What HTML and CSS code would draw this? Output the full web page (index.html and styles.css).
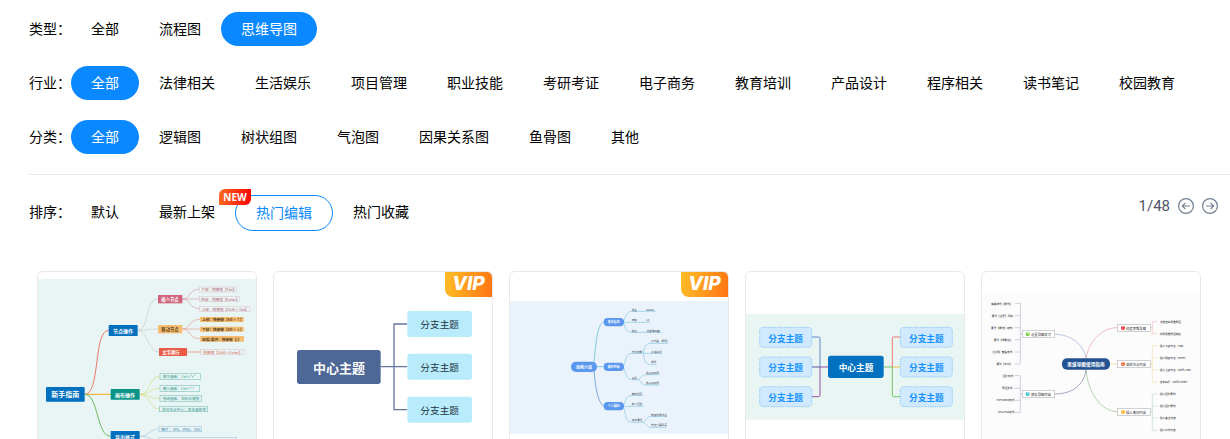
FILE: index.html
```html
<!DOCTYPE html>
<html lang="zh-CN">
<head>
    <meta charset="UTF-8">
    <meta name="viewport" content="width=device-width, initial-scale=1.0">
    <title>思维导图</title>
    <link rel="stylesheet" href="styles.css">
</head>
<body>
    <main class="page">
        <!-- 筛选条件 -->
        <section class="filters">
            <div class="row">
                <span class="label">类型：</span>
                <nav class="options">
                    <a href="#">全部</a>
                    <a href="#">流程图</a>
                    <a href="#" class="active">思维导图</a>
                </nav>
            </div>
            <div class="row">
                <span class="label">行业：</span>
                <nav class="options">
                    <a href="#" class="active">全部</a>
                    <a href="#">法律相关</a>
                    <a href="#">生活娱乐</a>
                    <a href="#">项目管理</a>
                    <a href="#">职业技能</a>
                    <a href="#">考研考证</a>
                    <a href="#">电子商务</a>
                    <a href="#">教育培训</a>
                    <a href="#">产品设计</a>
                    <a href="#">程序相关</a>
                    <a href="#">读书笔记</a>
                    <a href="#">校园教育</a>
                </nav>
            </div>
            <div class="row">
                <span class="label">分类：</span>
                <nav class="options">
                    <a href="#" class="active">全部</a>
                    <a href="#">逻辑图</a>
                    <a href="#">树状组图</a>
                    <a href="#">气泡图</a>
                    <a href="#">因果关系图</a>
                    <a href="#">鱼骨图</a>
                    <a href="#">其他</a>
                </nav>
            </div>
        </section>

        <!-- 排序和翻页 -->
        <section class="sort">
            <div class="row">
                <span class="label">排序：</span>
                <nav class="options">
                    <a href="#">默认</a>
                    <a href="#">最新上架</a>
                    <a href="#" class="current">热门编辑<span class="new">NEW</span></a>
                    <a href="#">热门收藏</a>
                </nav>
            </div>
            <div class="pager">
                <span>1/48</span>
                <button type="button" aria-label="上一页">
                    <svg viewBox="0 0 16 16"><circle cx="8" cy="8" r="7.4"/><path d="M12 8H4.5M7.5 4.8L4.3 8l3.2 3.2"/></svg>
                </button>
                <button type="button" aria-label="下一页">
                    <svg viewBox="0 0 16 16"><circle cx="8" cy="8" r="7.4"/><path d="M4 8h7.5M8.5 4.8L11.7 8l-3.2 3.2"/></svg>
                </button>
            </div>
        </section>

        <!-- 模板列表 -->
        <section class="cards">
            <a href="#" class="card">
                <svg class="thumb guide" viewBox="0 0 654 570">
                    <rect y="21" width="654" height="549" fill="#e8f5f4"/>
                    <g class="line">
                        <path d="M140 367C188 367 165 175 212 175" stroke="#e8796b" stroke-width="3"/>
                        <path d="M140 367H218" stroke="#f3b93f" stroke-width="4"/>
                        <path d="M140 367C182 367 175 493 218 493" stroke="#6dbb62" stroke-width="3"/>
                        <path d="M299 175C335 175 320 81 360 81M299 175C325 175 330 171 360 171M299 175C330 175 330 240 363 240" stroke="#c9c9c9" stroke-width="2"/>
                        <path d="M433 81C460 81 450 52 484 52M433 81H485M433 81C460 81 450 110 485 110" stroke="#d9a0ac" stroke-width="2"/>
                        <path d="M433 171C460 171 450 142 486 142M433 171H486M433 171C460 171 450 200 487 200" stroke="#e5a28f" stroke-width="2"/>
                        <path d="M447 240H488" stroke="#e8796b" stroke-width="2"/>
                        <path d="M305 367C340 367 330 313 366 313M305 367C340 367 335 349 366 349M305 367C335 367 335 380 366 380M305 367C335 367 335 411 364 411" stroke="#d9dc7c" stroke-width="2"/>
                        <path d="M305 493C335 493 335 471 363 471M305 493C335 493 340 504 363 504" stroke="#a9c9dc" stroke-width="2"/>
                    </g>
                    <g fill="#0070bf">
                        <rect x="24" y="345" width="116" height="44" rx="2"/>
                        <rect x="212" y="159" width="87" height="33" rx="2"/>
                        <rect x="218" y="351" width="87" height="32" rx="2" fill="#0a9488"/>
                        <rect x="218" y="477" width="87" height="33" rx="2"/>
                    </g>
                    <rect x="360" y="69" width="73" height="25" fill="#d0637b"/>
                    <rect x="360" y="159" width="73" height="25" fill="#f5bd70"/>
                    <rect x="363" y="228" width="84" height="24" fill="#e95a49"/>
                    <g fill="#f5bd70">
                        <rect x="486" y="135" width="131" height="15"/>
                        <rect x="486" y="164" width="131" height="15"/>
                        <rect x="487" y="192" width="131" height="17"/>
                    </g>
                    <g fill="none" stroke="#dba6b0">
                        <rect x="484" y="45" width="112" height="15"/>
                        <rect x="485" y="74" width="120" height="15"/>
                        <rect x="485" y="103" width="151" height="15"/>
                        <rect x="488" y="232" width="132" height="15"/>
                    </g>
                    <g fill="none" stroke="#86c6bd" stroke-width="2">
                        <rect x="366" y="305" width="121" height="17"/>
                        <rect x="366" y="341" width="119" height="17"/>
                        <rect x="366" y="371" width="125" height="17"/>
                        <rect x="364" y="403" width="145" height="16"/>
                        <rect x="363" y="463" width="128" height="16" stroke="#a9cbe2"/>
                        <rect x="363" y="496" width="233" height="16" stroke="#a9cbe2"/>
                    </g>
                    <g class="mid bold" fill="#fff">
                        <text x="82" y="367" font-size="21">新手指南</text>
                        <g font-size="15">
                            <text x="255" y="175">节点操作</text>
                            <text x="261" y="367">画布操作</text>
                            <text x="261" y="493">导出格式</text>
                        </g>
                        <g font-size="13">
                            <text x="396" y="81">插入节点</text>
                            <text x="396" y="171" fill="#5d4320">移动节点</text>
                            <text x="399" y="240">文字换行</text>
                        </g>
                    </g>
                    <g class="start" font-size="11" fill="#b96478">
                        <text x="489" y="53">下级：快捷键【Tab】</text>
                        <text x="489" y="82">同级：快捷键【Enter】</text>
                        <text x="491" y="111">上级：快捷键【Shift + Tab】</text>
                        <text x="496" y="240" fill="#dc6a5b">快捷键【Shift + Enter】</text>
                    </g>
                    <g class="start bold" font-size="11" fill="#5d4320">
                        <text x="492" y="143">上移：快捷键【Alt + ↑】</text>
                        <text x="492" y="172">下移：快捷键【Alt + ↓】</text>
                        <text x="492" y="201">收起/展开：快捷键【/】</text>
                    </g>
                    <g class="start" font-size="11" fill="#258e83">
                        <text x="374" y="314">放大画板：Ctrl +"+"</text>
                        <text x="374" y="350">缩小画板：Ctrl +"-"</text>
                        <text x="374" y="380">拖动画板：鼠标右键拖</text>
                        <text x="372" y="411">定位节点中心：双击画布空</text>
                        <text x="370" y="471" fill="#337cab">图片：JPG、PNG、SVG</text>
                    </g>
                </svg>
            </a>

            <a href="#" class="card">
                <svg class="thumb" viewBox="0 0 654 570">
                    <path class="line" d="M320 284H400M400 156H360V413H400" stroke="#66759c" stroke-width="4"/>
                    <rect x="69" y="234" width="251" height="102" rx="8" fill="#4d6796"/>
                    <g fill="#b8ecfc">
                        <rect x="400" y="117" width="194" height="78" rx="8"/>
                        <rect x="400" y="245" width="194" height="78" rx="8"/>
                        <rect x="400" y="374" width="194" height="78" rx="8"/>
                    </g>
                    <g class="mid" font-size="29" fill="#1d3444">
                        <text class="bold" x="195" y="285" font-size="39" fill="#fff">中心主题</text>
                        <text x="497" y="156">分支主题</text>
                        <text x="497" y="284">分支主题</text>
                        <text x="497" y="413">分支主题</text>
                    </g>
                </svg>
                <span class="vip">VIP</span>
            </a>

            <a href="#" class="card">
                <svg class="thumb" viewBox="0 0 654 570">
                    <rect y="87" width="654" height="399" fill="#eaf2fb"/>
                    <g class="line" stroke="#84c8df" stroke-width="2">
                        <path d="M252 272C258 200 264 156 281 150M261 284H281" stroke-width="3"/>
                        <path d="M252 297C258 365 268 395 281 402" stroke="#7ea9dc" stroke-width="3"/>
                        <path d="M340 150C348 135 346 118 368 118H437M340 151H420M340 150C348 170 346 181 368 181H455"/>
                        <path d="M340 284C350 260 346 244 368 244H400M340 284C350 305 346 323 368 323H385"/>
                        <path d="M400 244C402 226 408 214 422 214H475M400 244H455M400 244C402 268 408 278 422 278H440"/>
                        <path d="M385 323C393 319 394 308 408 308H448M385 323C393 327 394 339 408 339H448"/>
                        <path d="M340 402C348 387 346 370 368 370H400M340 403H400M340 402C348 432 346 451 368 451H400"/>
                        <path d="M400 451C408 447 410 433 424 433H471M400 451C408 455 410 466 424 466H471"/>
                    </g>
                    <g fill="#5a98ef">
                        <rect x="183" y="269" width="78" height="31" rx="15"/>
                        <rect x="281" y="138" width="61" height="25" rx="12"/>
                        <rect x="281" y="272" width="61" height="25" rx="12"/>
                        <rect x="281" y="390" width="61" height="25" rx="12"/>
                    </g>
                    <g class="mid bold" font-size="9" fill="#fff">
                        <text x="222" y="285" font-size="12">自我介绍</text>
                        <text x="311" y="151">基本信息</text>
                        <text x="311" y="285">爱好特长</text>
                        <text x="311" y="403">个人履历</text>
                    </g>
                    <g class="start" font-size="8" fill="#3d4852">
                        <text x="365" y="113">姓名</text>
                        <text x="409" y="113">XXXXX</text>
                        <text x="365" y="145">年龄</text>
                        <text x="409" y="145">18</text>
                        <text x="365" y="176">职业</text>
                        <text x="409" y="176">新媒体运营</text>
                        <text x="365" y="239">特长技能</text>
                        <text x="423" y="208">会乐器（钢琴）</text>
                        <text x="423" y="239">会说英语</text>
                        <text x="423" y="271">游泳</text>
                        <text x="365" y="318">爱好</text>
                        <text x="408" y="302">热爱运动员</text>
                        <text x="408" y="334">热爱运动员</text>
                        <text x="365" y="365">教育经历</text>
                        <text x="365" y="397">实习经验</text>
                        <text x="365" y="445">获奖情况</text>
                        <text x="423" y="428">校级优秀学生</text>
                        <text x="423" y="460">作文竞赛冠军</text>
                    </g>
                </svg>
                <span class="vip">VIP</span>
            </a>

            <a href="#" class="card">
                <svg class="thumb" viewBox="0 0 654 570">
                    <rect y="126" width="654" height="317" fill="#e8f5f2"/>
                    <g class="line" stroke-width="3">
                        <path d="M197 195H218Q222 195 222 199V285" stroke="#6688cc"/>
                        <path d="M222 285V370Q222 374 218 374H197M222 285H246" stroke="#96509f"/>
                        <path d="M197 285H222" stroke="#5a58a6"/>
                        <path d="M463 195H443Q439 195 439 199V285" stroke="#ee7a70"/>
                        <path d="M439 285H463" stroke="#f4be48"/>
                        <path d="M413 285H439V370Q439 374 443 374H463" stroke="#77c166"/>
                    </g>
                    <g fill="#d0e9ff" stroke="#69b5f7" stroke-width="2" stroke-dasharray="4 3">
                        <rect x="41" y="166" width="156" height="60" rx="10"/>
                        <rect x="41" y="255" width="156" height="60" rx="10"/>
                        <rect x="41" y="344" width="156" height="60" rx="10"/>
                        <rect x="463" y="166" width="156" height="60" rx="10"/>
                        <rect x="463" y="255" width="156" height="60" rx="10"/>
                        <rect x="463" y="344" width="156" height="60" rx="10"/>
                    </g>
                    <rect x="246" y="251" width="167" height="67" rx="8" fill="#0070c0"/>
                    <g class="mid bold" font-size="26" fill="#1592ff">
                        <text x="330" y="285" fill="#fff">中心主题</text>
                        <text x="119" y="197">分支主题</text>
                        <text x="119" y="285">分支主题</text>
                        <text x="119" y="374">分支主题</text>
                        <text x="541" y="197">分支主题</text>
                        <text x="541" y="285">分支主题</text>
                        <text x="541" y="374">分支主题</text>
                    </g>
                </svg>
            </a>

            <a href="#" class="card">
                <svg class="thumb" viewBox="0 0 654 570">
                    <rect y="66" width="654" height="504" fill="#fcfcfc"/>
                    <g class="line" stroke-width="2">
                        <path d="M218 187C270 187 305 220 312 259" stroke="#9aa6dc"/>
                        <path d="M218 366C280 366 308 330 312 293" stroke="#7b78ae"/>
                        <path d="M312 259C322 205 360 167 406 167" stroke="#ee9aa6"/>
                        <path d="M384 276H406" stroke="#e9d184"/>
                        <path d="M312 293C318 365 360 419 406 419" stroke="#90bd85"/>
                    </g>
                    <g class="line" stroke="#b3bbd0" stroke-width="2">
                        <path d="M98 94H115V276H98M98 131H115M98 167H115M98 203H115M98 240H115M115 186H121"/>
                        <path d="M98 311H115V421H98M98 349H115M98 385H115M115 366H121"/>
                        <path d="M526 149H511V185H526M505 167H511" stroke="#eeb9c0"/>
                        <path d="M526 221H511V330H526M511 257H526M511 293H526M505 276H511" stroke="#eee0a5"/>
                        <path d="M526 366H511V475H526M511 402H526M511 438H526M505 419H511" stroke="#bfd8ca"/>
                    </g>
                    <g fill="#fff" stroke="#bbb" stroke-width="2">
                        <rect x="121" y="175" width="97" height="21"/>
                        <rect x="121" y="355" width="97" height="22"/>
                        <rect x="406" y="157" width="99" height="21"/>
                        <rect x="406" y="265" width="99" height="22"/>
                        <rect x="406" y="409" width="99" height="21"/>
                    </g>
                    <circle cx="137" cy="186" r="6" fill="#62c71c"/>
                    <circle cx="137" cy="366" r="6" fill="#12b5c9"/>
                    <circle cx="423" cy="168" r="6" fill="#e3191f"/>
                    <circle cx="423" cy="276" r="6" fill="#f1511b"/>
                    <circle cx="423" cy="420" r="6" fill="#f9a90b"/>
                    <rect x="240" y="259" width="144" height="34" rx="15" fill="#235292"/>
                    <g class="mid bold" font-size="9" fill="#fff">
                        <text x="312" y="276" font-size="14">思维导图使用指南</text>
                        <text x="137" y="186">4</text>
                        <text x="137" y="366">5</text>
                        <text x="423" y="168">1</text>
                        <text x="423" y="276">2</text>
                        <text x="423" y="420">3</text>
                    </g>
                    <g class="start" font-size="10" fill="#333">
                        <text x="147" y="187">设置导图样式</text>
                        <text x="147" y="367">保存导图内容</text>
                        <text x="432" y="168">创建思维导图</text>
                        <text x="432" y="277">编辑节点内容</text>
                        <text x="432" y="420">插入素材内容</text>
                    </g>
                    <g class="end" font-size="8" fill="#222">
                        <text x="91" y="95">编辑样式【样式】</text>
                        <text x="93" y="132">更改【主题】风格</text>
                        <text x="91" y="168">更改【骨架】结构</text>
                        <text x="91" y="204">更改【背景色】</text>
                        <text x="91" y="240">【大纲】查看模式</text>
                        <text x="91" y="276">更改【水印】</text>
                        <text x="94" y="312">图片格式</text>
                        <text x="92" y="349">导图文件</text>
                        <text x="97" y="385">PDF/Word格式</text>
                        <text x="97" y="421">JPG/PNG格式</text>
                    </g>
                    <g class="start" font-size="8" fill="#222">
                        <text x="533" y="150">新建空白思维导图</text>
                        <text x="533" y="186">套用思维导图模板</text>
                        <text x="533" y="222">插入下级节点（Tab）</text>
                        <text x="533" y="258">插入同级节点（Enter）</text>
                        <text x="533" y="294">插入上级节点（Shift+Tab）</text>
                        <text x="533" y="330">文本换行（Shift+Enter）</text>
                        <text x="533" y="367">插入图标素材</text>
                        <text x="533" y="403">插入图片素材</text>
                        <text x="533" y="439">插入备注内容</text>
                        <text x="533" y="475">插入公式内容</text>
                    </g>
                </svg>
            </a>
        </section>
    </main>
</body>
</html>
```

FILE: styles.css
```css
* {
    box-sizing: border-box;
}
body {
    margin: 0;
    background-color: #fff;
    color: #000;
    font-family: "Noto Sans CJK SC", sans-serif;
    font-size: 14px;
}
a {
    color: inherit;
    text-decoration: none;
}
.page {
    height: 100vh;
    overflow: hidden;
    padding: 12px 0 0 29px;
}
.filters {
    display: flex;
    flex-direction: column;
    gap: 20px;
    padding-bottom: 20px;
    border-bottom: 1px solid #e8e8e8;
}
.row {
    display: flex;
    line-height: 32px;
}
.label {
    flex: none;
    width: 42px;
}
.options {
    display: flex;
    flex-wrap: wrap;
    align-items: flex-start;
}
.options a {
    padding: 0 20px 2px;
    border-radius: 18px;
}
.options .active {
    background-color: #0a88ff;
    color: #fff;
}
.options .current {
    position: relative;
    border: 1px solid #0a88ff;
    color: #0a88ff;
}
/* 角标 */
.new {
    position: absolute;
    top: -7px;
    left: -17px;
    width: 32px;
    height: 16px;
    border-radius: 6px 0 6px 0;
    background: linear-gradient(90deg, #ff6a21, #ff0400);
    color: #fff;
    font: bold 10px/16px "Open Sans", sans-serif;
    text-align: center;
}
.sort {
    display: flex;
    justify-content: space-between;
    padding: 20px 12px 40px 0;
}
.pager {
    display: flex;
    align-items: center;
    gap: 8px;
    height: 22px;
    color: #4e5666;
    font-family: Roboto, sans-serif;
    font-size: 15px;
}
.pager button {
    width: 16px;
    height: 16px;
    padding: 0;
    border: none;
    background: none;
    cursor: pointer;
}
.pager svg {
    display: block;
    fill: none;
    stroke: #738093;
    stroke-width: 1.2;
}
.cards {
    display: grid;
    grid-template-columns: repeat(auto-fill, 220px);
    gap: 16px;
    padding: 0 8px;
}
.card {
    position: relative;
    overflow: hidden;
    border: 1px solid #e8e8e8;
    border-radius: 6px;
}
.thumb {
    display: block;
    width: 100%;
}
.vip {
    position: absolute;
    top: 0;
    right: 0;
    width: 47px;
    height: 25px;
    border-radius: 0 0 0 8px;
    background: linear-gradient(100deg, #ffbe26, #ff7414);
    color: #fff;
    font: italic 800 19px/24px Inter, sans-serif;
    text-align: center;
}

/* 导图缩略图 */
.line {
    fill: none;
}
.thumb text {
    dominant-baseline: central;
}
.bold {
    font-weight: bold;
}
.mid {
    text-anchor: middle;
}
.start {
    text-anchor: start;
}
.end {
    text-anchor: end;
}
```
